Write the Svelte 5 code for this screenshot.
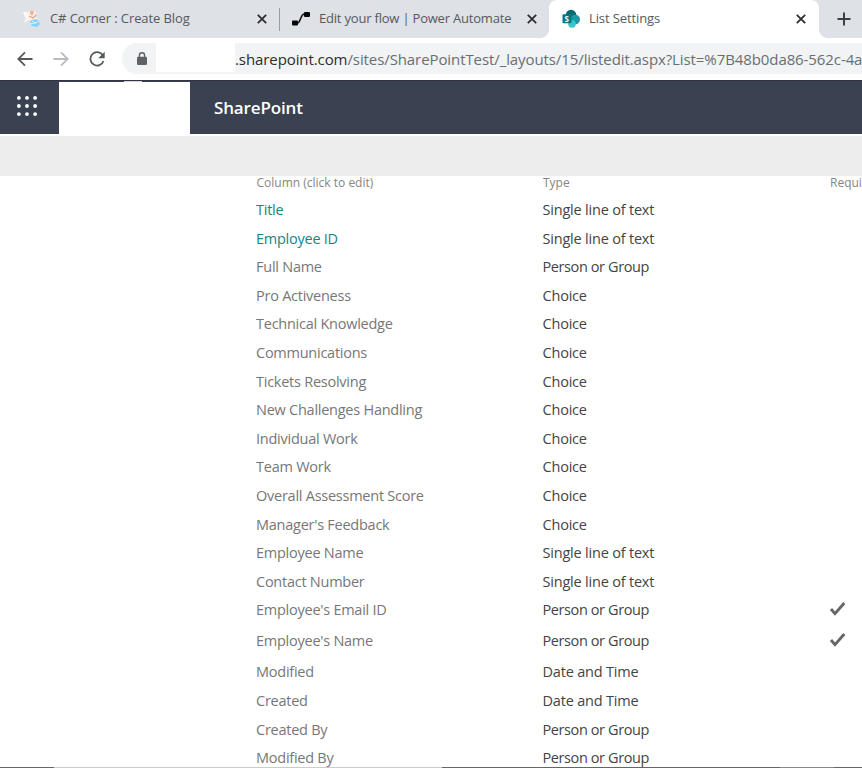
<script>
  const columns = [
    { name: "Title", type: "Single line of text", link: true },
    { name: "Employee ID", type: "Single line of text", link: true },
    { name: "Full Name", type: "Person or Group" },
    { name: "Pro Activeness", type: "Choice" },
    { name: "Technical Knowledge", type: "Choice" },
    { name: "Communications", type: "Choice" },
    { name: "Tickets Resolving", type: "Choice" },
    { name: "New Challenges Handling", type: "Choice" },
    { name: "Individual Work", type: "Choice" },
    { name: "Team Work", type: "Choice" },
    { name: "Overall Assessment Score", type: "Choice" },
    { name: "Manager's Feedback", type: "Choice" },
    { name: "Employee Name", type: "Single line of text" },
    { name: "Contact Number", type: "Single line of text" },
    { name: "Employee's Email ID", type: "Person or Group", required: true },
    { name: "Employee's Name", type: "Person or Group", required: true },
    { name: "Modified", type: "Date and Time" },
    { name: "Created", type: "Date and Time" },
    { name: "Created By", type: "Person or Group" },
    { name: "Modified By", type: "Person or Group" }
  ];

  const dots = [2, 10.5, 19];
</script>

{#snippet close()}
  <svg class="close" width="10" height="10" viewBox="0 0 10 10">
    <path d="M.8.8l8.4 8.4M9.2.8L.8 9.2" />
  </svg>
{/snippet}

<div class="window">
  <div class="tabs">
    <div class="tab first">
      <svg class="favicon" width="20" height="20" viewBox="0 0 20 20">
        <path d="M1 3q4-1 6 3l-1 5q-3 3-4 2l2-3Q2 7 1 3z" fill="#f7fafc" />
        <path d="M6 3l4-2 4 2-1 5 4 2-5 2-6-1-3 3 2-6z" fill="#fff2e9" />
        <path d="M8 2q4-2 4 2l-2 3-2-2z" fill="#efb699" />
        <path d="M7 7l4 2 3-3" fill="none" stroke="#ee9c82" stroke-width="1.2" />
        <path d="M9 11l6-1 3 5-3 3-5-1-2-3z" fill="#83d3f4" />
        <path d="M10 12l4 3M8 15l8-2" stroke="#d9f4fe" />
      </svg>
      <span class="tab-title">C# Corner : Create Blog</span>
      {@render close()}
    </div>
    <div class="tab second">
      <svg class="favicon" width="20" height="16" viewBox="0 0 20 16">
        <path d="M4 12h2.5c3 0 3-9 7-9H16" fill="none" stroke="#111" stroke-width="1.6" />
        <rect x="1" y="9.5" width="6" height="5" rx="1" fill="#080808" />
        <rect x="13" y="1" width="6" height="5" rx="1" fill="#080808" />
      </svg>
      <span class="tab-title">Edit your flow | Power Automate</span>
      {@render close()}
    </div>
    <div class="tab active">
      <svg class="favicon" width="20" height="20" viewBox="0 0 20 20">
        <circle cx="10" cy="6" r="5.3" fill="#036c70" />
        <circle cx="14.2" cy="10.5" r="4.8" fill="#1a9ba1" />
        <circle cx="11" cy="15" r="3.8" fill="#37c6d0" />
        <rect x="1.5" y="5.2" width="9" height="9" rx="1" fill="#03787c" />
        <text x="3.6" y="12.6" fill="#fff" font-size="8" font-weight="700">S</text>
      </svg>
      <span class="tab-title">List Settings</span>
      {@render close()}
    </div>
    <div class="new-tab">
      <svg width="14" height="14" viewBox="0 0 14 14">
        <path d="M7 .5v13M.5 7h13" stroke="#3c4043" stroke-width="2" />
      </svg>
    </div>
  </div>

  <div class="toolbar">
    <svg class="nav" width="16" height="16" viewBox="0 0 16 16">
      <path d="M15.5 8H1.5M8 1.3L1.3 8 8 14.7" />
    </svg>
    <svg class="nav disabled" width="16" height="16" viewBox="0 0 16 16">
      <path d="M.5 8h14M8 1.3L14.7 8 8 14.7" />
    </svg>
    <svg class="nav" width="16" height="16" viewBox="0 0 16 16">
      <path d="M13.7 4.1A6.7 6.7 0 1 0 14.5 10" />
      <path d="M15.7.7v6.5H9.3z" class="head" />
    </svg>
    <div class="address">
      <svg class="lock" width="10" height="14" viewBox="0 0 10 14">
        <rect y="4.7" width="10" height="8.3" rx="1.2" fill="#5f6368" />
        <path d="M2.4 5V3.4a2.6 2.6 0 0 1 5.2 0V5" fill="none" stroke="#5f6368" stroke-width="1.4" />
      </svg>
      <span class="redacted"></span>
      <span class="url"><b>.sharepoint.com</b>/sites/SharePointTest/_layouts/15/listedit.aspx?List=%7B48b0da86-562c-4a</span>
    </div>
  </div>

  <header class="suite">
    <svg class="waffle" width="20" height="20" viewBox="0 0 21 21">
      {#each dots as y}
        {#each dots as x}
          <circle cx={x} cy={y} r="2" fill="#fff" />
        {/each}
      {/each}
    </svg>
    <div class="logo"></div>
    <span class="product">SharePoint</span>
  </header>
  <div class="ribbon"></div>

  <main>
    <div class="row head-row">
      <span>Column (click to edit)</span>
      <span>Type</span>
      <span>Required</span>
    </div>
    {#each columns as column}
      <div class="row" class:required={column.required}>
        <span class="name" class:link={column.link}>{column.name}</span>
        <span class="type" class:tight={column.type === "Person or Group"}>{column.type}</span>
        {#if column.required}
          <svg class="check" width="18" height="15" viewBox="0 0 18 15">
            <path d="M2 8l4 4.6L15.3 2" />
          </svg>
        {/if}
      </div>
    {/each}
  </main>
  <div class="bottom-edge"></div>
</div>

<style>
  :global(body) {
    overflow: hidden;
    background: #fff;
  }

  .window {
    position: relative;
    display: flex;
    flex-direction: column;
    width: 862px;
    height: 768px;
    overflow: hidden;
    background: #fff;
    font-family: "Segoe UI", "Open Sans", "Noto Sans", sans-serif;
  }

  .window > * {
    flex-shrink: 0;
  }

  .tabs {
    display: flex;
    height: 38px;
    background: #dee1e6;
  }

  .tab {
    display: flex;
    align-items: center;
    box-sizing: border-box;
    height: 38px;
    white-space: nowrap;
  }

  .first {
    width: 280px;
    padding: 0 13px 0 22px;
    background: linear-gradient(#9b9ea3, #9b9ea3) right 8px / 1px 23px no-repeat;
  }

  .second {
    width: 269px;
    padding: 0 12px 0 11px;
  }

  .active {
    position: relative;
    width: 270px;
    padding: 0 13px 0 12px;
    border-radius: 8px 8px 0 0;
    background: #fff;
  }

  .active::before,
  .active::after {
    content: "";
    position: absolute;
    bottom: 0;
    width: 8px;
    height: 8px;
  }

  .active::before {
    left: -8px;
    background: radial-gradient(circle at 0 0, #dee1e6 7.5px, #fff 8px);
  }

  .active::after {
    right: -8px;
    background: radial-gradient(circle at 100% 0, #dee1e6 7.5px, #fff 8px);
  }

  .tab-title {
    margin-left: 8px;
    color: #56595e;
    font-size: 13px;
    line-height: 18px;
    padding-bottom: 2px;
    letter-spacing: -0.1px;
  }

  .second .tab-title {
    letter-spacing: -0.2px;
  }

  .close {
    margin-left: auto;
    fill: none;
    stroke: #2c2e31;
    stroke-width: 1.8;
  }

  .new-tab {
    display: flex;
    align-items: center;
    padding-left: 18px;
  }

  .toolbar {
    display: flex;
    align-items: center;
    gap: 20px;
    height: 41px;
    padding: 0 0 1px 17px;
  }

  .nav {
    flex-shrink: 0;
    fill: none;
    stroke: #55595d;
    stroke-width: 1.8;
  }

  .nav .head {
    fill: #55595d;
    stroke: none;
  }

  .disabled {
    stroke: #b8babd;
  }

  .address {
    display: flex;
    align-items: center;
    flex: 1;
    height: 31px;
    margin-left: -3px;
    padding-left: 15px;
    border-radius: 16px 0 0 16px;
    background: #f1f3f4;
    overflow: hidden;
    white-space: nowrap;
  }

  .lock {
    flex-shrink: 0;
  }

  .redacted {
    align-self: flex-start;
    flex-shrink: 0;
    width: 79px;
    height: 29px;
    margin-left: 9px;
    background: #fff;
  }

  .url {
    color: #6a6e72;
    font-size: 15px;
    letter-spacing: -0.09px;
  }

  .url b {
    color: #2b2d30;
    font-weight: 400;
  }

  .suite {
    display: flex;
    align-items: center;
    height: 54px;
    background:
      linear-gradient(#d5d5da, #d5d5da) 124px 0 / 18px 1px no-repeat,
      #3a4150;
    border-top: 1px solid #343345;
    box-sizing: border-box;
  }

  .waffle {
    margin: 0 22px 3px 17px;
  }

  .logo {
    align-self: flex-end;
    width: 130.5px;
    height: 52px;
    background: #fff;
  }

  .product {
    margin-left: 24.5px;
    color: #fff;
    font-size: 17px;
    font-weight: 600;
    letter-spacing: -0.15px;
  }

  .ribbon {
    height: 40px;
    margin-top: 2px;
    background: #ededed;
  }

  .row {
    display: grid;
    grid-template-columns: 286.5px 287px 100px;
    height: 28.6px;
    padding-left: 256px;
    line-height: 28.6px;
    font-size: 14.5px;
    letter-spacing: -0.25px;
    white-space: nowrap;
  }

  .head-row {
    height: 20.1px;
    padding-left: 256.5px;
    line-height: 13px;
    font-size: 12px;
    letter-spacing: 0;
    color: #858585;
  }

  .required {
    height: 31px;
  }

  .name {
    color: #777;
  }

  .link {
    color: #23827f;
  }

  .type {
    color: #444;
    letter-spacing: -0.2px;
  }

  .tight {
    letter-spacing: -0.4px;
  }

  .check {
    margin: 5px 0 0 -1px;
    fill: none;
    stroke: #666;
    stroke-width: 2.9;
  }

  .bottom-edge {
    position: absolute;
    right: 0;
    bottom: 0;
    left: 0;
    height: 1px;
    background: linear-gradient(90deg, #666 54px, #ccc 54px 442px, #666 442px 780px, #888 780px 834px, #666 834px);
  }
</style>
